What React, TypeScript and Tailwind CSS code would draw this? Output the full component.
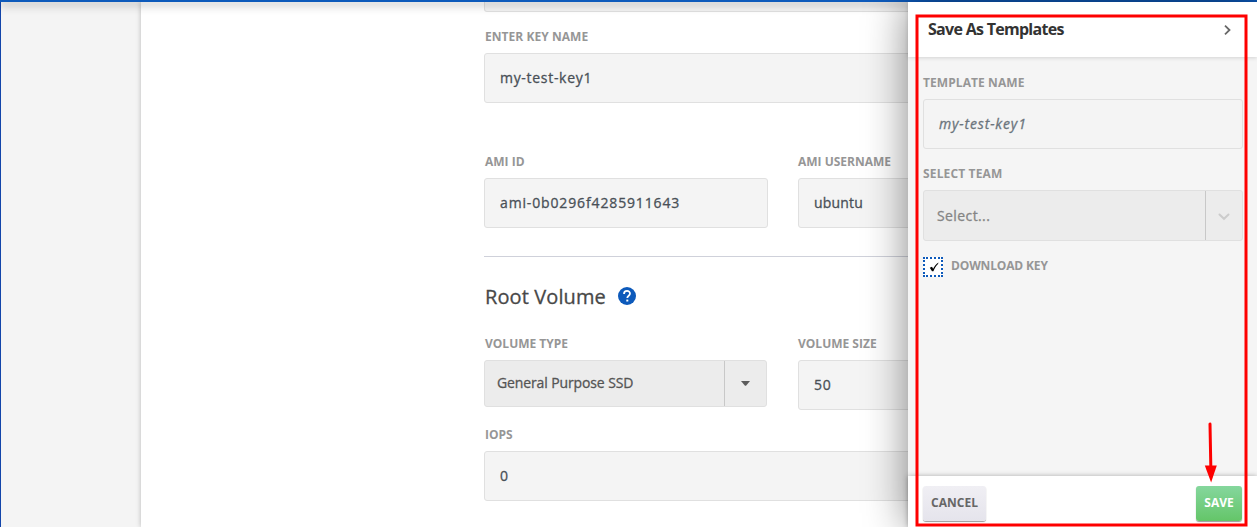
import type { ReactNode } from "react";

function Label({ children, className = "" }: { children: ReactNode; className?: string }) {
  return (
    <div className={`mb-1.5 h-5 whitespace-nowrap text-[12px] font-bold leading-5 text-[#969696] ${className}`}>
      {children}
    </div>
  );
}

function Field({ value, className = "text-[#495057]" }: { value: string; className?: string }) {
  return (
    <div className={`flex h-[50px] items-center rounded-[3px] border border-[#e0e0e0] bg-[#f4f4f4] pb-0.5 pl-[15px] text-[14px] [-webkit-text-stroke:0.3px_currentColor] ${className}`}>
      <span className="whitespace-nowrap">{value}</span>
    </div>
  );
}

function MainForm() {
  return (
    <main className="flex-1 overflow-hidden bg-white pl-[343px] shadow-[0_0_5px_rgba(0,0,0,0.25)]">
      <div className="w-[598px]">
        <div className="h-[10px] rounded-b-[3px] border border-t-0 border-[#e0e0e0] bg-[#f4f4f4]" />
        <div className="mt-[15px]">
          <Label className="pl-px tracking-[0.05px]">ENTER KEY NAME</Label>
          <Field value="my-test-key1" className="pl-4 tracking-[0.7px] text-[#495057]" />
        </div>
        <div className="mt-[49px] flex gap-[30px]">
          <div className="w-[284px]">
            <Label className="pl-px">AMI ID</Label>
            <Field value="ami-0b0296f4285911643" className="tracking-[0.86px] text-[#495057]" />
          </div>
          <div className="w-[284px]">
            <Label>AMI USERNAME</Label>
            <Field value="ubuntu" className="tracking-[0.2px] text-[#495057]" />
          </div>
        </div>
        <div className="mt-7 h-px bg-[#cfd1da]" />
        <div className="mt-[26px] flex h-7 items-center">
          <h2 className="whitespace-nowrap pl-px text-[20px] leading-7 tracking-[0.1px] text-[#484848] [-webkit-text-stroke:0.3px_currentColor]">Root Volume</h2>
          <svg className="ml-3 size-[18px] -translate-y-px" viewBox="0 0 18 18">
            <circle cx="9" cy="9" r="9" fill="#0d5abb" />
            <path d="M6 7.1c0-4.4 6.1-4 6-.5C12 8.700 9.300 8.800 9.300 11" fill="none" stroke="#fff" strokeWidth="1.800" />
            <path d="M8.300 12.600h2v1.900h-2z" fill="#fff" />
          </svg>
        </div>
        <div className="mt-[23px] flex gap-[31px]">
          <div className="w-[283px]">
            <Label className="pl-px">VOLUME TYPE</Label>
            <div className="flex h-[47px] rounded-[3px] border border-[#e0e0e0] bg-[#ececec]">
              <div className="flex flex-1 items-center pb-0.5 pl-3 text-[14px] tracking-[-0.12px] text-[#555] [-webkit-text-stroke:0.3px_currentColor]">
                <span className="whitespace-nowrap">General Purpose SSD</span>
              </div>
              <div className="flex w-[42px] items-center justify-center border-l border-[#c8c8c8]">
                <svg className="h-[5px] w-[9px]" viewBox="0 0 9 5"><path d="M0 0h9L5 4.700H4z" fill="#5c5c5c" /></svg>
              </div>
            </div>
          </div>
          <div className="w-[284px]">
            <Label>VOLUME SIZE</Label>
            <Field value="50" className="tracking-[0.8px] text-[#495057]" />
          </div>
        </div>
        <div className="mt-[15px]">
          <Label className="pl-px">IOPS</Label>
          <Field value="0" className="pl-4 text-[#495057]" />
        </div>
      </div>
    </main>
  );
}

function TemplatePanel() {
  return (
    <aside className="absolute bottom-0 right-0 top-0.5 flex w-[349px] flex-col bg-[#f5f5f5] shadow-[0_0_40px_rgba(0,0,0,0.48)]">
      <header className="flex h-[55px] shrink-0 items-center justify-between bg-white pl-5 pr-[26px] shadow-[0_1px_4px_rgba(0,0,0,0.14)]">
        <h3 className="-translate-y-px whitespace-nowrap text-[16px] font-bold tracking-[-0.71px] text-[#333]">Save As Templates</h3>
        <svg className="h-[10px] w-[7px]" viewBox="0 0 7 10"><path d="M1 .7 5.500 5 1 9.300" fill="none" stroke="#686868" strokeWidth="1.800" /></svg>
      </header>
      <div className="flex-1 pl-[15px] pr-3.5 pt-4">
        <Label className="tracking-[0.08px]">TEMPLATE NAME</Label>
        <Field value="my-test-key1" className="pl-4 text-[13px] italic tracking-[0.84px] text-[#6b747c] [-webkit-text-stroke:0.1px_currentColor]" />
        <Label className="mt-[15px] tracking-[0.15px]">SELECT TEAM</Label>
        <div className="flex h-[51px] rounded-[3px] border border-[#e0e0e0] bg-[#ececec]">
          <div className="flex flex-1 items-center pl-[13px] text-[14px] tracking-[0.4px] text-[#858585] [-webkit-text-stroke:0.3px_currentColor]">Select...</div>
          <div className="flex w-[37px] items-center justify-center border-l border-[#c8c8c8]">
            <svg className="h-2 w-3 translate-y-px" viewBox="0 0 12 8"><path d="m1.500 1.500 4.500 4.300 4.500-4.300" fill="none" stroke="#ccc" strokeWidth="2" strokeLinecap="round" /></svg>
          </div>
        </div>
        <div className="mt-4 flex gap-2">
          <div className="flex size-5 items-center justify-center border-2 border-dotted border-[#0d5abb] bg-white pl-px">
            <svg className="size-[10px]" viewBox="0 0 10 10"><path d="M.8 5.700 3 4.800l1.100 2C5.400 4 7.100 1.800 9.500.4L9 2C7 4 5.500 6.300 4.400 9.300H3Z" fill="#000" /></svg>
          </div>
          <Label className="-mt-px tracking-[-0.15px]">DOWNLOAD KEY</Label>
        </div>
      </div>
      <footer className="flex h-[51px] shrink-0 justify-between bg-white pl-[15px] pr-[15px] pt-[10px] shadow-[0_0_5px_rgba(0,0,0,0.3)]">
        <button className="h-[35px] w-[63px] rounded-[3px] bg-linear-to-b from-[#f0eff4] to-[#e5e4ec] pb-0.5 text-[12px] font-bold text-[#666] shadow-[0_1px_1px_rgba(0,0,0,0.4)]">CANCEL</button>
        <button className="h-[35px] w-[46px] rounded-[3px] bg-linear-to-b from-[#85d79d] to-[#64c568] pb-0.5 text-[12px] font-bold text-white shadow-[0_1px_1px_rgba(0,0,0,0.4)]">SAVE</button>
      </footer>
    </aside>
  );
}

export default function App() {
  return (
    <div className="relative flex h-[527px] w-[1257px] flex-col overflow-hidden bg-white font-['Open_Sans','Noto_Sans',sans-serif]">
      <div className="z-10 h-0.5 shrink-0 bg-[#0d5abb] shadow-[0_2px_10px_rgba(0,0,0,0.6)]" />
      <div className="flex min-h-0 flex-1">
        <div className="w-[141px] shrink-0 border-l border-[#1245aa] bg-[#f4f4f4]" />
        <MainForm />
      </div>
      <div className="absolute inset-0 z-20">
        <TemplatePanel />
      </div>
      <svg className="pointer-events-none absolute inset-0 z-30 h-[527px] w-[1257px]" viewBox="0 0 1257 527">
        <rect x="917" y="16" width="329" height="509" fill="none" stroke="#fe0000" strokeWidth="3" />
        <path d="m1210 424 .8 42" stroke="#fe0000" strokeWidth="3" strokeLinecap="round" />
        <path d="M1204.800 465.500h12L1211.100 482.500Z" fill="#fe0000" />
      </svg>
    </div>
  );
}
